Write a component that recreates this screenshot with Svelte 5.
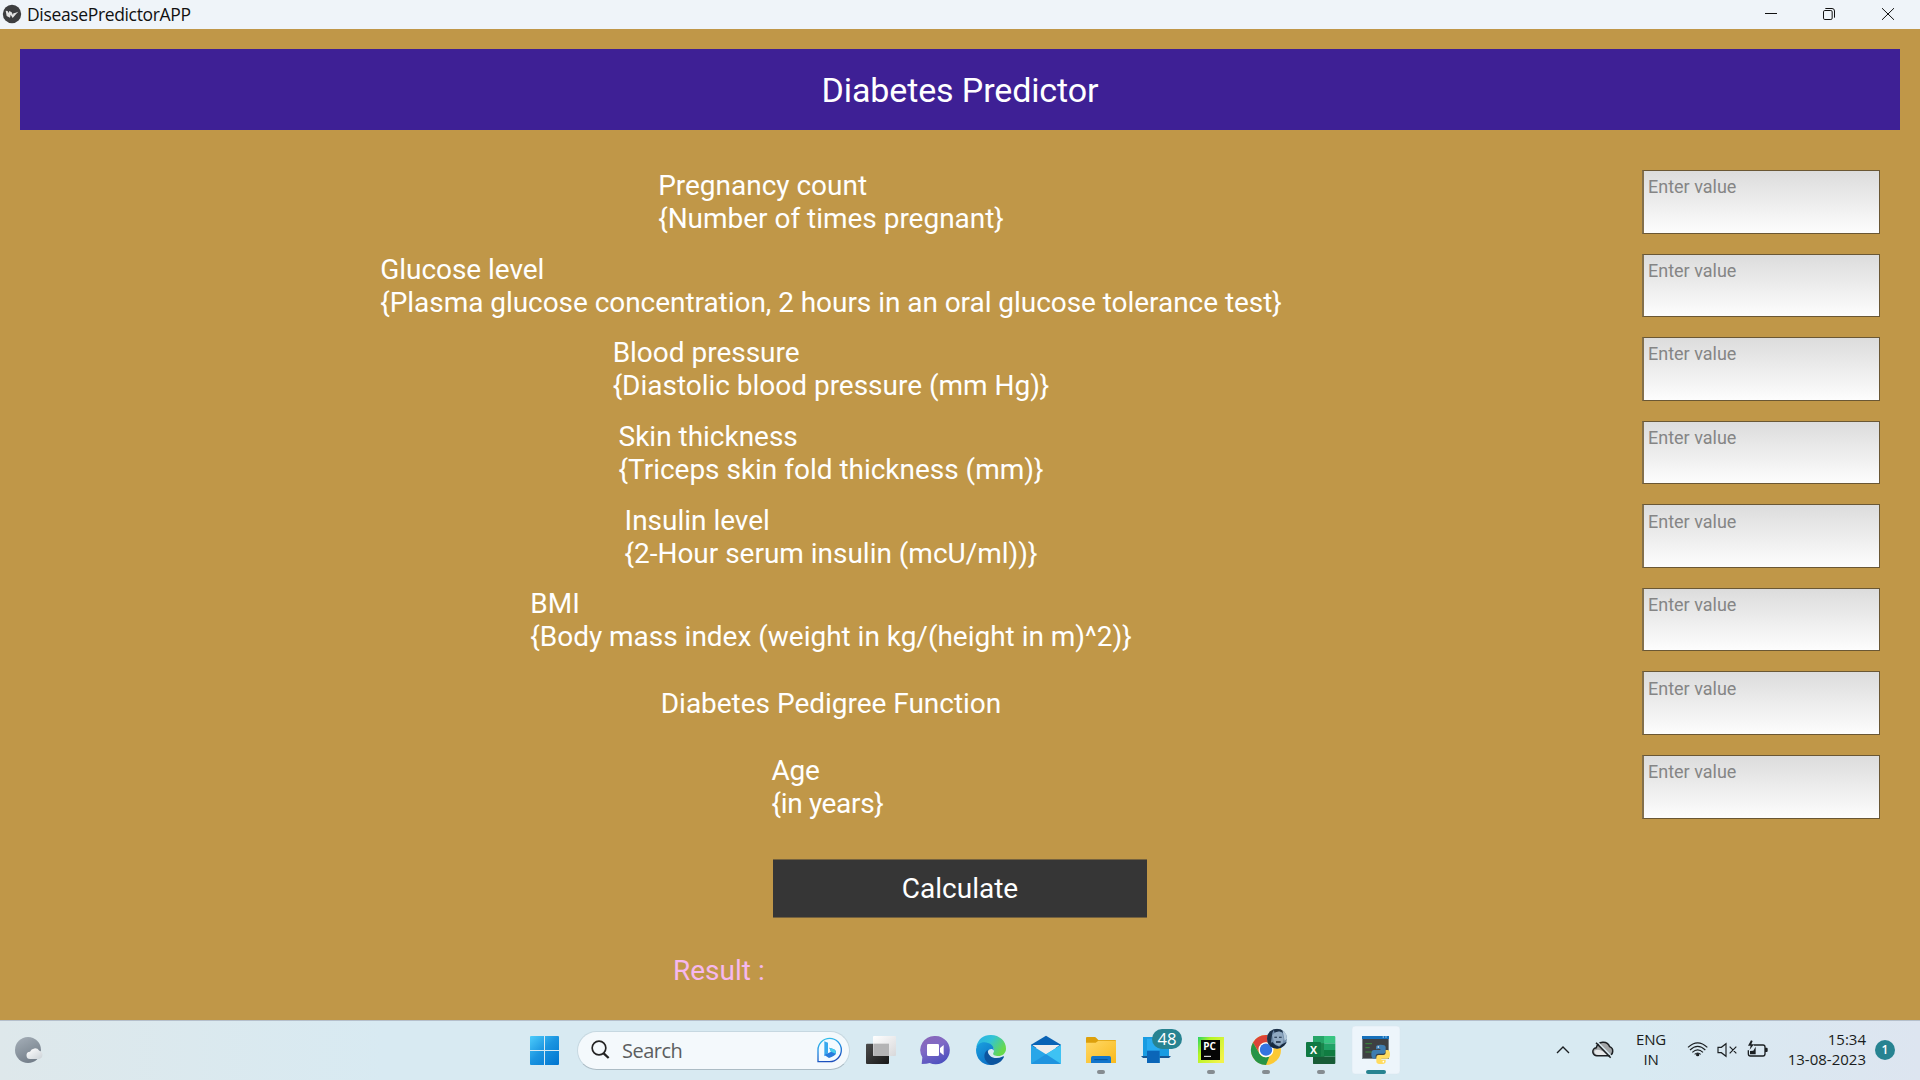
<script>
  const fields = [
    { id: 'preg', lines: ['Pregnancy count', '{Number of times pregnant}'] },
    { id: 'gluc', lines: ['Glucose level', '{Plasma glucose concentration, 2 hours in an oral glucose tolerance test}'] },
    { id: 'blood', lines: ['Blood pressure', '{Diastolic blood pressure (mm Hg)}'] },
    { id: 'skin', lines: ['Skin thickness', '{Triceps skin fold thickness (mm)}'] },
    { id: 'insulin', lines: ['Insulin level', '{2-Hour serum insulin (mcU/ml))}'] },
    { id: 'bmi', lines: ['BMI', '{Body mass index (weight in kg/(height in m)^2)}'] },
    { id: 'dpf', lines: ['Diabetes Pedigree Function'] },
    { id: 'age', lines: ['Age', '{in years}'] }
  ];
</script>

<div class="screen">
  <header class="titlebar">
    <svg class="logo" width="20" height="29" viewBox="6 0 60 87">
      <circle cx="36" cy="42" r="27.5" fill="#3d3e40" />
      <path d="M17 32l6 1 2 6 3-6 7 4 4 8 1-5 5-1 10-4-6 6-11 13-6-10-2 9-10-5z" fill="#e4e4e4" />
    </svg>
    <span class="name">DiseasePredictorAPP</span>
    <svg class="controls" width="156" height="29" viewBox="492 0 468 87" fill="none" stroke="#111" stroke-width="3">
      <path d="M495 40.5h36" />
      <rect x="670.5" y="31.5" width="26" height="27" rx="4" />
      <path d="M676 25.500h20q7.500 0 7.500 7.500v20" />
      <path d="M846 24.500l36 35M882 24.500l-36 35" />
    </svg>
  </header>

  <main>
    <h1>Diabetes Predictor</h1>
    <section class="form">
      {#each fields as f}
        <div class="row">
          <div class="cell">
            <label for={f.id} class={f.id}>{#each f.lines as line}<span>{line}</span>{/each}</label>
          </div>
          <input id={f.id} placeholder="Enter value" />
        </div>
      {/each}
    </section>
    <button class="calc">Calculate</button>
    <div class="result">Result :</div>
  </main>

  <footer class="taskbar">
    <svg class="weather" width="50" height="60" viewBox="0 30 150 180">
      <defs>
        <linearGradient id="moon" x1="0" y1="0" x2=".5" y2="1"><stop offset="0" stop-color="#a6b0b9" /><stop offset="1" stop-color="#75808b" /></linearGradient>
        <linearGradient id="cloud" x1="0" y1="0" x2="1" y2="1"><stop offset="0" stop-color="#fff" /><stop offset="1" stop-color="#ccd2d7" /></linearGradient>
      </defs>
      <circle cx="84" cy="120" r="39" fill="url(#moon)" />
      <path d="M91 147a11 11 0 0 1-1-22 16 16 0 0 1 28-3 13 13 0 0 1 0 25z" fill="url(#cloud)" />
    </svg>

    <div class="dock">
      <svg width="55" height="60" viewBox="51 15 165 180">
        <defs><linearGradient id="win" gradientUnits="userSpaceOnUse" x1="90" y1="63" x2="170" y2="150"><stop offset="0" stop-color="#4dccfb" /><stop offset=".5" stop-color="#1a94e0" /><stop offset="1" stop-color="#0277d1" /></linearGradient></defs>
        <path d="M93 63h39v42H90V66q0-3 3-3zM135 63h39q3 0 3 3v39h-42zM90 108h42v42H93q-3 0-3-3zM135 108h42v39q0 3-3 3h-39z" fill="url(#win)" />
      </svg>
      <div class="search">
        <svg width="22" height="22" viewBox="270 74 66 66" fill="none" stroke="#222"><circle cx="297" cy="101" r="20.500" stroke-width="5" /><path d="M311 117l15 14" stroke-width="7" /></svg>
        <span>Search</span>
        <svg class="bing" width="28" height="28" viewBox="950 65 84 84">
          <defs><linearGradient id="bing" x1="0" y1="0" x2=".3" y2="1"><stop offset="0" stop-color="#38ccec" /><stop offset=".5" stop-color="#2490e4" /><stop offset="1" stop-color="#1c4fbd" /></linearGradient></defs>
          <path d="M956 142v-35a35 35 0 1 1 35 35z" fill="#f3fbff" stroke="url(#bing)" stroke-width="4" />
          <path d="M975 81l11 4v32l-11 9z" fill="#38a9ee" />
          <path d="M975 122l14-7 6-3-5-12 14 5q9 5 5 15-3 5-20 11z" fill="#287cdd" />
          <path d="M990 100l14 5q8 5 5 13l-14-6z" fill="#45ccec" />
        </svg>
      </div>

      <svg width="55" height="60" viewBox="9 15 165 180">
        <defs><linearGradient id="tva" x1="0" y1="0" x2="1" y2="1"><stop offset="0" stop-color="#4c4c4c" /><stop offset="1" stop-color="#171717" /></linearGradient><linearGradient id="tvb" x1="0" y1="0" x2="1" y2="1"><stop offset="0" stop-color="#fff" /><stop offset="1" stop-color="#d8d8da" /></linearGradient></defs>
        <rect x="48" y="86" width="69" height="61" rx="3" fill="url(#tva)" />
        <rect x="69" y="63" width="69" height="60" rx="3" fill="url(#tvb)" />
        <rect x="70" y="86" width="47" height="37" fill="#b4b4b5" />
      </svg>
      <svg width="55" height="60" viewBox="174 15 165 180">
        <defs><linearGradient id="chat" gradientUnits="userSpaceOnUse" x1="230" y1="63" x2="270" y2="147"><stop offset="0" stop-color="#8a67b8" /><stop offset=".4" stop-color="#8069c5" /><stop offset="1" stop-color="#4c50bf" /></linearGradient></defs>
        <path d="M257 63a42.500 42.500 0 1 1-18 81q-8 3-24 3l2-20a42.500 42.500 0 0 1 40-64z" fill="url(#chat)" />
        <rect x="231" y="87" width="36" height="36" rx="4" fill="#fff" /><path d="M270 99l11-9v31l-11-9z" fill="#fff" />
      </svg>
      <svg width="55" height="60" viewBox="339 15 165 180">
        <defs>
          <linearGradient id="eg" x1="0" y1="0" x2="1" y2=".5"><stop offset="0" stop-color="#28afe9" /><stop offset=".5" stop-color="#32c3d5" /><stop offset="1" stop-color="#68d94a" /></linearGradient>
          <linearGradient id="eb" x1="0" y1="0" x2=".8" y2="1"><stop offset="0" stop-color="#1aa1df" /><stop offset="1" stop-color="#0a68c2" /></linearGradient>
        </defs>
        <path d="M379 96C383 72 402 59 423 60c25 0 46 19 45 41 0 14-11 22-23 22-10 0-18-3-15-9 5-8 2-17-7-21-12-5-29-5-44 3z" fill="url(#eg)" />
        <path d="M378 105c1-20 21-27 36-21 13 4 19 14 17 23-8-12-23 1-18 15 5 12 17 19 36 14-5 6-15 14-28 14-25 0-43-20-43-45z" fill="url(#eb)" />
        <path d="M413 104c-15 10-14 35 10 46 20 0 33-11 39-24 0-3-2-3-5-1-20 9-44 3-44-21z" fill="#0c559f" />
      </svg>
      <svg width="55" height="60" viewBox="504 15 165 180">
        <path d="M543 89l45-27 45 27v10h-90z" fill="#0963b5" /><path d="M547 90h82l-36 27h-9z" fill="#eee" />
        <path d="M543 90l45 28 45-28v54q0 3-3 3h-84q-3 0-3-3z" fill="#28a6e8" /><path d="M588 118l45-28v56z" fill="#3ec2f3" /><path d="M543 146l45-28 44 29h-87z" fill="#1f94df" />
      </svg>
      <svg width="55" height="60" viewBox="669 15 165 180">
        <defs><linearGradient id="fold" x1="0" y1="0" x2="1" y2="1"><stop offset="0" stop-color="#ffd866" /><stop offset="1" stop-color="#f9ba1c" /></linearGradient></defs>
        <path d="M708 69q0-3 3-3h23q3 0 5 3l6 6h50q3 0 3 3v10h-90z" fill="#dda00b" /><path d="M708 83h29l8-6h50q3 0 3 3v64H708z" fill="url(#fold)" />
        <path d="M723 144v-16q0-5 5-5h50q5 0 5 5v16z" fill="#1276cc" /><path d="M733 134h40" stroke="#075296" stroke-width="3" />
        <rect x="741" y="165" width="24" height="12" rx="6" fill="#858c91" />
      </svg>

      <svg width="55" height="60" viewBox="-6 15 165 180">
        <path d="M39 66h35v61H39zM79 88h38v37H79z" fill="#189ce2" /><path d="M33 123h90l-6 6H39z" fill="#165793" /><path d="M51 71h38v73H51z" fill="#27abf0" /><path d="M51 107h38v37H51z" fill="#0b66b8" />
        <rect x="66" y="42" width="90" height="60" rx="30" fill="#278391" />
        <text x="111" y="91" class="badge48">48</text>
      </svg>
      <svg width="55" height="60" viewBox="159 15 165 180">
        <defs><linearGradient id="pc" x1="0" y1="0" x2="1" y2=".7"><stop offset="0" stop-color="#25d366" /><stop offset=".35" stop-color="#b5f524" /><stop offset="1" stop-color="#f2f34a" /></linearGradient></defs>
        <rect x="204" y="66" width="78" height="78" fill="url(#pc)" /><rect x="213" y="75" width="57" height="60" fill="#050505" />
        <text x="220" y="104" class="pctext">PC</text><path d="M222 124h21" stroke="#fff" stroke-width="3" />
        <rect x="231" y="165" width="24" height="12" rx="6" fill="#858c91" />
      </svg>
      <svg width="55" height="60" viewBox="324 15 165 180">
        <defs><clipPath id="av"><circle cx="441" cy="71" r="30" /></clipPath></defs>
        <circle cx="408" cy="105" r="45" fill="#fcc934" />
        <path d="M369 82.500A45 45 0 0 1 447 82.500H408a22 22 0 0 0-19 33z" fill="#dc4437" />
        <path d="M369 82.500l19.500 33.500a22 22 0 0 0 30 8L408 150a45 45 0 0 1-39-67.500z" fill="#269447" />
        <circle cx="408" cy="104" r="22.500" fill="#fff" /><circle cx="408" cy="104" r="18.500" fill="#3474e0" />
        <g clip-path="url(#av)"><rect x="411" y="41" width="60" height="60" fill="#6e8ba9" /><path d="M411 41h22l-6 13-4 27 11 20h-24zM430 41h26l6 14-14-6-14 4z" fill="#1f3349" /><path d="M427 61q12-17 29-8l5 18-3 14-12 8-13-8z" fill="#91aac2" /><path d="M433 65h8v3h-8zM447 65h8v3h-8zM438 79h14v4h-14zM456 88l15-8v21h-30zM426 80l10 10 14 6-3 8-28-6z" fill="#172a40" /><path d="M456 41l12 8 3 22-7 6-4-20z" fill="#b4cadb" /></g>
        <rect x="396" y="165" width="24" height="12" rx="6" fill="#858c91" />
      </svg>
      <svg width="55" height="60" viewBox="489 15 165 180">
        <path d="M549 66q0-3 3-3h31v84h-31q-3 0-3-3z" fill="#1b854b" /><path d="M549 66q0-3 3-3h30v22h-33z" fill="#26a568" /><path d="M582 63h31q3 0 3 3v19h-34z" fill="#38c481" /><path d="M582 85h34v20h-34z" fill="#20a366" /><path d="M582 105h34v20h-34z" fill="#107c41" /><path d="M549 125h67v19q0 3-3 3h-61q-3 0-3-3z" fill="#185c37" />
        <rect x="528" y="81" width="45" height="45" rx="3" fill="#107943" /><text x="550.500" y="116" class="xl">X</text>
        <rect x="561" y="165" width="24" height="12" rx="6" fill="#858c91" />
      </svg>
      <svg width="55" height="60" viewBox="654 15 165 180">
        <rect x="666" y="33" width="144" height="144" rx="10" fill="#edf5fb" stroke="#d8e5ec" stroke-width="1.500" />
        <rect x="696" y="63" width="81" height="69" fill="#7c8489" /><rect x="699" y="72" width="75" height="57" fill="#3e4042" /><rect x="696" y="63" width="81" height="9" fill="#1570bb" /><path d="M758 66h4M766 66h4" stroke="#b7ddf5" stroke-width="3" />
        <path d="M706 86h20M706 98h13M706 111h20" stroke="#3c8b3c" stroke-width="3" />
        <path d="M738 103v-7q0-7 14-7t15 7v13q0 7-7 7h-15q-8 0-8 8v7h-5q-8 0-8-13t8-13h19v-3z" fill="#3f7db0" />
        <path d="M767 105h5q8 0 8 13t-8 13h-18v3h13v6q0 7-14 7t-14-7v-13q0-7 7-7h14q7 0 7-8z" fill="#ffdb60" />
        <circle cx="745" cy="96" r="2.500" fill="#fff" /><circle cx="760" cy="140" r="2.500" fill="#fff" />
        <rect x="708" y="165" width="60" height="12" rx="6" fill="#278391" />
      </svg>
    </div>

    <div class="tray">
      <svg width="80" height="60" viewBox="60 15 240 180" fill="none" stroke="#1b1f22">
        <path d="M81 114l18-18 18 18" stroke-width="4" />
        <path d="M202 122a12 12 0 0 1-3-24 21 21 0 0 1 40-3 14 14 0 0 1-3 27z" fill="#a3a6a8" stroke-width="4.500" /><path d="M193 107q13-6 25 2l16 11h-30q-11-2-11-13z" fill="#e6e8e9" stroke="none" /><path d="M202 80l44 45" stroke="#d9eaf1" stroke-width="4" /><path d="M198 83l44 45" stroke-width="4.500" />
      </svg>
      <div class="lang"><span>ENG</span><span>IN</span></div>
      <svg class="status" width="90" height="60" viewBox="460 15 270 180" fill="none" stroke="#1b1f22" stroke-width="3.500">
        <path d="M475 97q29-27 58 0M481 105q23-22 46 0M488 112q16-15 32 0" /><path d="M495 118q9-8 18 0" /><circle cx="504" cy="119" r="5" fill="#1b1f22" stroke="none" />
        <path d="M565 97h10l14-11v38l-14-11h-10zM600 95l20 20M620 95l-20 20" />
        <path d="M672 90h28q6 0 6 6v20q0 7-6 7h-38q-6 0-6-7v-10" stroke-width="4" /><path d="M706 98h5q3 0 3 4v5q0 4-3 4h-5z" fill="#1b1f22" stroke="none" /><path d="M661 118v-10l10-1 7-12v23z" fill="#1b1f22" stroke="none" /><path d="M664 76l-9 16h8l-3 12 13-16h-8l4-10z" fill="#1b1f22" stroke="none" />
      </svg>
      <div class="clock"><span>15:34</span><span>13-08-2023</span></div>
      <div class="notice">1</div>
    </div>
  </footer>
</div>

<style>
  :global(body) { margin: 0; overflow: hidden; }
  .screen { width: 1920px; height: 1080px; display: flex; flex-direction: column; font-family: Roboto, "Liberation Sans", sans-serif; }
  .titlebar { height: 29px; background: #eff4f9; display: flex; align-items: center; flex: none; box-sizing: border-box; padding-left: 2px; }
  .name { font: 17.500px/29px "Open Sans", "Noto Sans", sans-serif; letter-spacing: -0.35px; color: #111; margin-left: 5px; }
  .controls { margin-left: auto; }
  main { height: 991px; background: #c09748; box-sizing: border-box; padding: 20px; display: flex; flex-direction: column; align-items: center; flex: none; }
  h1 { margin: 0; width: 100%; height: 81px; line-height: 83px; text-align: center; background: #3e2095; color: #fff; font-size: 34px; font-weight: 400; letter-spacing: -0.12px; flex: none; }
  .form { width: 1840px; margin-top: 40px; display: grid; row-gap: 20px; grid-template-rows: repeat(8, 63.57px); flex: none; }
  .row { display: grid; grid-template-columns: 1fr 238px; grid-template-rows: 100%; column-gap: 20px; min-height: 0; }
  .cell { display: flex; align-items: center; justify-content: center; min-height: 0; }
  label { display: flex; flex-direction: column; flex: none; color: #fff; font-size: 28px; line-height: 33px; white-space: nowrap; padding-top: 1px; letter-spacing: -0.02px; }
  .gluc { letter-spacing: -0.05px; }
  .age { letter-spacing: -0.35px; padding-right: 7px; }
  input { width: 100%; height: 100%; box-sizing: border-box; border: 1px solid #6a5734; border-left-width: 2px; border-left-color: #84704b; outline: 0; background: linear-gradient(#dcdcdc, #fdfdfd); padding: 0 5px 30px 4px; font: 18px Roboto, sans-serif; border-radius: 0; }
  input::placeholder { color: #858585; opacity: 1; }
  .calc { margin: 40px 0 0; width: 374px; height: 59.500px; padding: 1px 0 0; border: 0 solid #75623f; border-width: 1px 0; background: #363636; color: #fff; font: 28px Roboto, sans-serif; flex: none; }
  .result { width: 1144px; margin-top: 35.500px; font-size: 28px; line-height: 33px; color: #f5b8ee; padding-left: 285px; box-sizing: border-box; }
  .taskbar { height: 60px; box-sizing: border-box; display: flex; flex: none; background: linear-gradient(90deg, #dee8eb 0, #d8eaf2 20%, #d8eaf2 85%, #dde5f0 100%); box-shadow: inset 0 1px #b5bfcb; font-family: "Open Sans", "Noto Sans", sans-serif; }
  .weather { margin-right: 467px; flex: none; }
  .dock { display: flex; flex: none; align-items: center; }
  .dock svg { flex: none; }
  .search { box-sizing: border-box; width: 273px; height: 39px; margin: 0 3px 0 5px; border-radius: 20px; background: #f4f9fc; border: 1px solid #c6d8e1; border-bottom-color: #acbcc5; display: flex; align-items: center; padding: 0 5px 0 12px; }
  .search span { font-size: 20px; color: #5c5e60; margin-left: 10px; letter-spacing: -0.5px; }
  .search .bing { margin-left: auto; }
  .badge48 { font: 50px "Open Sans", sans-serif; fill: #fff; text-anchor: middle; }
  .pctext { font: 700 30px "Open Sans", sans-serif; fill: #fff; }
  .xl { font: 700 32px "Open Sans", sans-serif; fill: #fff; text-anchor: middle; }
  .tray { margin-left: auto; display: flex; align-items: center; width: 370px; flex: none; color: #1a1d20; font-size: 15px; line-height: 20px; }
  .tray svg { flex: none; }
  .status { margin-left: 11px; }
  .lang, .clock { display: flex; flex-direction: column; padding-bottom: 2px; }
  .lang { width: 42px; align-items: center; letter-spacing: -0.2px; }
  .clock { width: 93px; align-items: flex-end; white-space: nowrap; }
  .notice { width: 20px; height: 20px; border-radius: 50%; margin-left: 9px; background: #278391; color: #fff; font-size: 12px; font-weight: 600; text-align: center; }
</style>
